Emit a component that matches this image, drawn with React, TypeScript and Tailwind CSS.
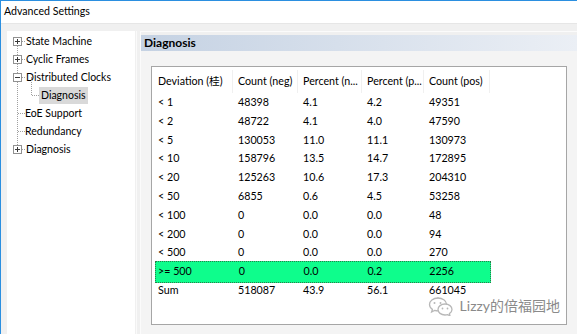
import React from "react";

const rows: [string, string, string, string, string][] = [
  ["< 1", "48398", "4.1", "4.2", "49351"],
  ["< 2", "48722", "4.1", "4.0", "47590"],
  ["< 5", "130053", "11.0", "11.1", "130973"],
  ["< 10", "158796", "13.5", "14.7", "172895"],
  ["< 20", "125263", "10.6", "17.3", "204310"],
  ["< 50", "6855", "0.6", "4.5", "53258"],
  ["< 100", "0", "0.0", "0.0", "48"],
  ["< 200", "0", "0.0", "0.0", "94"],
  ["< 500", "0", "0.0", "0.0", "270"],
  [">= 500", "0", "0.0", "0.2", "2256"],
  ["Sum", "518087", "43.9", "56.1", "661045"],
];

const colW = ["w-[78px]", "w-[65px]", "w-[64px]", "w-[62px]", "w-[66px]"];
const headers = ["Deviation (桂)", "Count (neg)", "Percent (n...", "Percent (p...", "Count (pos)"];

function Box({ minus }: { minus?: boolean }) {
  return (
    <span className="relative z-10 flex h-[9px] w-[9px] items-center justify-center border border-[#919191] bg-white">
      <span className="absolute h-px w-[5px] bg-[#3a3a3a]" />
      {!minus && <span className="absolute h-[5px] w-px bg-[#3a3a3a]" />}
    </span>
  );
}

function TreeRow({ label, box, minus }: { label: string; box?: boolean; minus?: boolean }) {
  return (
    <div className="flex h-[18px] items-center">
      <div className="flex w-[18px] items-center justify-start pl-[6px]">
        {box ? <Box minus={minus} /> : <span className="ml-[5px] w-[7px] border-t border-dotted border-[#a0a0a0]" />}
      </div>
      {box && <span className="-ml-[3px] mr-[1px] w-[3px] border-t border-dotted border-[#a0a0a0]" />}
      <span>{label}</span>
    </div>
  );
}

function WeChat() {
  return (
    <svg width="26" height="20" viewBox="0 0 26 20" fill="none">
      <path d="M10 2C5 2 1.5 5 1.5 8.5c0 2 1.1 3.7 2.9 4.9L3.6 16l3-1.6c1 .3 2.2.5 3.4.5" stroke="#b8b8b8" strokeWidth="1.3" strokeLinecap="round" />
      <path d="M10 2c4.6 0 8.2 2.7 8.5 6" stroke="#b8b8b8" strokeWidth="1.3" strokeLinecap="round" />
      <path d="M17 8c-4 0-7 2.5-7 5.5S13 19 17 19c.9 0 1.700-.1 2.500-.4l2.500 1.200-.6-2.200c1.600-1 2.600-2.500 2.600-4.100C24 10.500 21 8 17 8z" stroke="#b8b8b8" strokeWidth="1.3" strokeLinejoin="round" />
      <circle cx="6.5" cy="7" r="1" fill="#b8b8b8" />
      <circle cx="12.5" cy="7" r="1" fill="#b8b8b8" />
      <circle cx="14.5" cy="12.5" r=".9" fill="#b8b8b8" />
      <circle cx="19.5" cy="12.5" r=".9" fill="#b8b8b8" />
    </svg>
  );
}

export default function App() {
  return (
    <div
      className="flex h-[334px] w-[577px] flex-col overflow-hidden border-l border-t border-[#2b8fe0] bg-[#f0f0f0] text-[10.7px] text-black"
      style={{ fontFamily: 'Lato, "Noto Sans CJK SC", sans-serif' }}
    >
      <div className="flex h-[22px] items-center bg-white pl-[3px] text-[10.6px] text-black">Advanced Settings</div>
      <div className="h-px bg-[#e6e6e6]" />
      <div className="flex flex-1 pl-[6px] pt-[7px]">
        {/* tree */}
        <div className="relative w-[128px] bg-white pt-px text-[10.5px]">
          <div className="absolute left-[10px] top-[10px] h-[108px] border-l border-dotted border-[#a0a0a0]" />
          <div className="absolute left-[24px] top-[46px] h-[18px] border-l border-dotted border-[#a0a0a0]" />
          <div className="leading-none">
            <TreeRow label="State Machine" box />
            <TreeRow label="Cyclic Frames" box />
            <TreeRow label="Distributed Clocks" box minus />
            <div className="flex h-[18px] items-center pl-[25px]">
              <span className="w-[7px] border-t border-dotted border-[#a0a0a0]" />
              <span className="flex h-[17px] items-center bg-[#d9d9d9] px-[2px]">Diagnosis</span>
            </div>
            <TreeRow label="EoE Support" />
            <TreeRow label="Redundancy" />
            <TreeRow label="Diagnosis" box />
          </div>
        </div>
        {/* right */}
        <div className="ml-[1px] w-[3px] border-l border-[#fafafa]" />
        <div className="ml-[1px] flex flex-1 flex-col border-l border-t border-[#fbfbfb] pt-[3px]">
          <div className="flex h-[16px] items-center bg-gradient-to-r from-[#c5d2e3] to-[#ebeff5] pl-[3px] text-[12px] font-bold leading-none text-black">
            Diagnosis
          </div>
          <div className="flex-1 bg-[#f4f4f4] pb-[9px] pl-[10px] pr-[10px] pt-[15px]">
            <div className="relative h-full border border-[#a6a6a6] bg-white pl-[3px] pt-[3px] leading-none">
              <div className="flex h-[23px] items-center">
                {headers.map((h, i) => (
                  <div key={i} className={`${colW[i]} flex h-full items-center border-r border-[#f0f0f0] ${i === 0 ? "pl-[3px]" : "pl-[5px]"} whitespace-nowrap`}>
                    {h}
                  </div>
                ))}
              </div>
              {rows.map((r, ri) => {
                const green = r[0] === ">= 500";
                return (
                  <div
                    key={ri}
                    className={
                      green
                        ? "-my-[1.5px] flex h-[22px] w-[336px] items-center border border-dotted border-[#2a7a4a] bg-[#0efd8c]"
                        : "flex h-[18.8px] items-center"
                    }
                  >
                    {r.map((c, ci) => (
                      <div key={ci} className={`${colW[ci]} ${ci === 0 ? (green ? "pl-[2px]" : "pl-[3px]") : "pl-[5px]"} whitespace-nowrap`}>
                        {c}
                      </div>
                    ))}
                  </div>
                );
              })}
              <div className="absolute bottom-[8px] right-[6px] flex items-center gap-[6px]">
                <WeChat />
                <span
                  className="text-[14px] text-[#8a8a8a]"
                  style={{ textShadow: "0 0 1px #fff, 0 0 2px #fff" }}
                >
                  Lizzy的倍福园地
                </span>
              </div>
            </div>
          </div>
        </div>
      </div>
    </div>
  );
}
